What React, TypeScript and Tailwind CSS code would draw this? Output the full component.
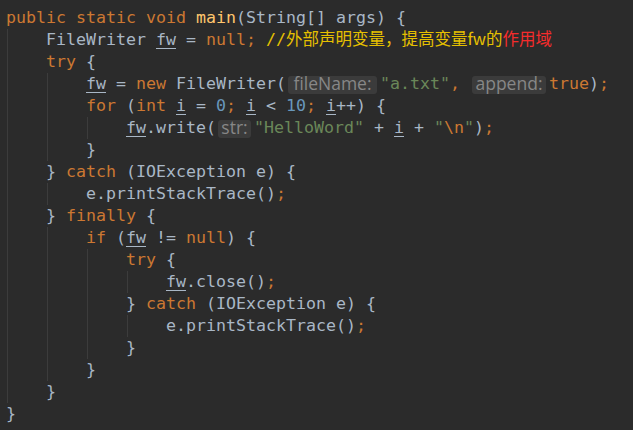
import React from "react";

type Tok = [string, string];

const CLS: Record<string, string> = {
  d: "text-[#a9b7c6]",
  k: "text-[#cc7832]",
  p: "text-[#cc7832]",
  m: "text-[#ffc66d]",
  n: "text-[#6897bb]",
  s: "text-[#6a8759]",
  u: "text-[#a9b7c6] underline decoration-1 underline-offset-[3px]",
  cm: "text-[#e6c000]",
};

const lines: { indent: number; toks: Tok[] }[] = [
  {
    indent: 0,
    toks: [
      ["k", "public"], ["d", " "], ["k", "static"], ["d", " "], ["k", "void"], ["d", " "],
      ["m", "main"], ["d", "(String[] args) {"],
    ],
  },
  {
    indent: 1,
    toks: [
      ["d", "FileWriter "], ["u", "fw"], ["d", " = "], ["k", "null"], ["p", ";"], ["d", " "],
      ["cm", "//"], ["cj", "外部声明变量，提高变量fw的"], ["cr", "作用域"],
    ],
  },
  { indent: 1, toks: [["k", "try"], ["d", " {"]] },
  {
    indent: 2,
    toks: [
      ["u", "fw"], ["d", " = "], ["k", "new"], ["d", " FileWriter("], ["h1", "fileName:"],
      ["s", "\"a.txt\""], ["p", ","], ["d", " "], ["h2", "append:"], ["k", "true"], ["d", ")"], ["p", ";"],
    ],
  },
  {
    indent: 2,
    toks: [
      ["k", "for"], ["d", " ("], ["k", "int"], ["d", " "], ["u", "i"], ["d", " = "], ["n", "0"], ["p", ";"],
      ["d", " "], ["u", "i"], ["d", " < "], ["n", "10"], ["p", ";"], ["d", " "], ["u", "i"], ["d", "++) {"],
    ],
  },
  {
    indent: 3,
    toks: [
      ["u", "fw"], ["d", ".write("], ["h3", "str:"], ["s", "\"HelloWord\""], ["d", " + "], ["u", "i"],
      ["d", " + "], ["s", "\""], ["k", "\\n"], ["s", "\""], ["d", ")"], ["p", ";"],
    ],
  },
  { indent: 2, toks: [["d", "}"]] },
  { indent: 1, toks: [["d", "} "], ["k", "catch"], ["d", " (IOException e) {"]] },
  { indent: 2, toks: [["d", "e.printStackTrace()"], ["p", ";"]] },
  { indent: 1, toks: [["d", "} "], ["k", "finally"], ["d", " {"]] },
  { indent: 2, toks: [["k", "if"], ["d", " ("], ["u", "fw"], ["d", " != "], ["k", "null"], ["d", ") {"]] },
  { indent: 3, toks: [["k", "try"], ["d", " {"]] },
  { indent: 4, toks: [["u", "fw"], ["d", ".close()"], ["p", ";"]] },
  { indent: 3, toks: [["d", "} "], ["k", "catch"], ["d", " (IOException e) {"]] },
  { indent: 4, toks: [["d", "e.printStackTrace()"], ["p", ";"]] },
  { indent: 3, toks: [["d", "}"]] },
  { indent: 2, toks: [["d", "}"]] },
  { indent: 1, toks: [["d", "}"]] },
  { indent: 0, toks: [["d", "}"]] },
];

function Hint({ text, w }: { text: string; w: string }) {
  return (
    <span
      className={`inline-flex h-[18px] ${w} mt-[3px] ml-[2px] mr-[3px] items-center justify-center rounded-[3px] bg-[#3b3b3b] pb-[2px] align-top text-[17.5px] leading-none text-[#878787] [font-family:'Open_Sans','Noto_Sans',sans-serif]`}
    >
      {text}
    </span>
  );
}

function Token({ t }: { t: Tok }) {
  const [type, text] = t;
  if (type === "h1") return <Hint text={text} w="w-[89px]" />;
  if (type === "h2") return <Hint text={text} w="w-[74px]" />;
  if (type === "h3") return <Hint text={text} w="w-[33px]" />;
  if (type === "cj")
    return (
      <span className="text-[16.5px] leading-none text-[#e6c000] [font-family:'Noto_Sans_CJK_SC',sans-serif]">
        {text}
      </span>
    );
  if (type === "cr")
    return (
      <span className="text-[16.5px] leading-none text-[#f52c2c] [font-family:'Noto_Sans_CJK_SC',sans-serif]">
        {text}
      </span>
    );
  return <span className={CLS[type]}>{text}</span>;
}

export default function App() {
  return (
    <div className="min-h-screen w-full overflow-hidden bg-[#2b2b2b] pl-[6px] pt-[7px] text-[16.61px] [font-family:'DejaVu_Sans_Mono','Liberation_Mono',monospace]">
      {lines.map((ln, i) => (
        <div key={i} className="h-[22px] whitespace-pre leading-[22px]">
          {Array.from({ length: ln.indent }).map((_, j) => (
            <span
              key={j}
              className="-mr-px ml-px inline-block h-[22px] w-[40px] border-l border-[#3c3c3c] align-top"
            />
          ))}
          {ln.toks.map((t, k) => (
            <Token key={k} t={t} />
          ))}
        </div>
      ))}
    </div>
  );
}
